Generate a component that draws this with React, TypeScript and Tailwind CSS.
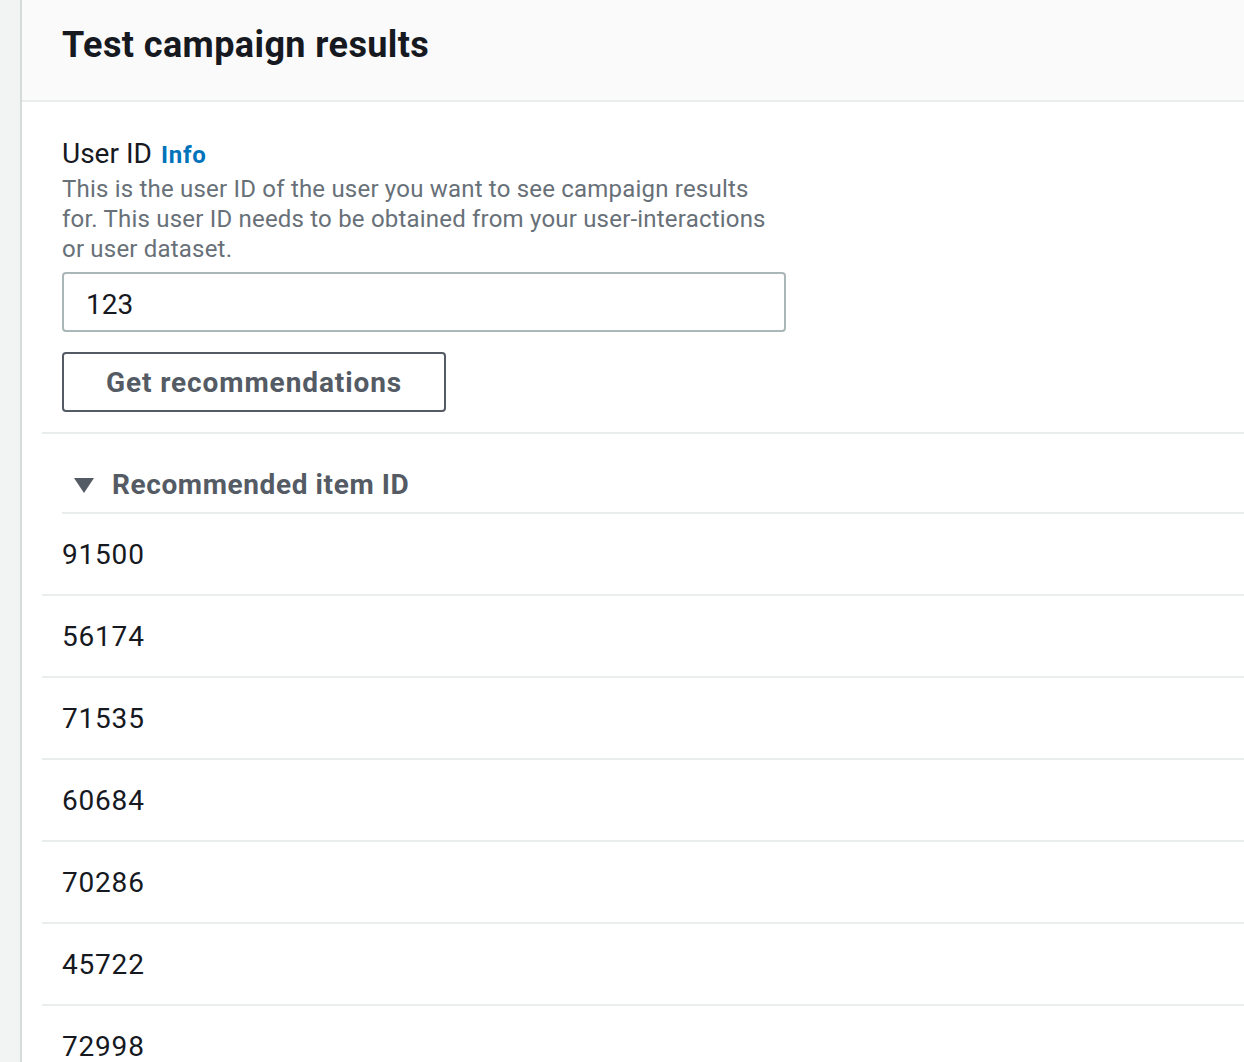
import React from "react";

const rows = ["91500", "56174", "71535", "60684", "70286", "45722", "72998"];

export default function App() {
  return (
    <div
      className="flex h-[1062px] w-full overflow-hidden bg-white"
      style={{ fontFamily: "Roboto, 'Noto Sans', sans-serif" }}
    >
      <div className="w-[22px] shrink-0 border-r-2 border-[#d5dbdb] bg-[#f2f3f3]" />
      <div className="flex min-w-0 flex-1 flex-col">
        <div className="flex h-[102px] shrink-0 items-center border-b-2 border-[#eaeded] bg-[#fafafa] px-[40px] pb-[10px]">
          <h1 className="text-[36px] font-bold leading-[44px] tracking-[0.4px] text-[#16191f]">Test campaign results</h1>
        </div>
        <div className="flex flex-col pl-[20px]">
          <div className="flex flex-col px-[20px] pt-[32px]">
            <div className="flex items-baseline gap-[9px] leading-[40px]">
              <span className="text-[28px] text-[#16191f]">User ID</span>
              <span className="text-[24px] font-bold tracking-[0.8px] text-[#0073bb]">Info</span>
            </div>
            <p className="-mt-[1px] w-[724px] text-[24px] leading-[30px] tracking-[0.2px] text-[#687078]">
              This is the user ID of the user you want to see campaign results for. This user ID needs to be obtained
              from your user-interactions or user dataset.
            </p>
            <div className="mt-[8px] flex h-[60px] w-[724px] items-center rounded-[4px] border-2 border-[#aab7b8] pl-[22px] pt-[5px] text-[28px] text-[#16191f]">
              123
            </div>
            <button className="mt-[20px] flex h-[60px] w-[384px] items-center justify-center rounded-[4px] border-2 border-[#545b64] bg-white pt-[2px] text-[28px] font-bold tracking-[0.9px] text-[#545b64]">
              Get recommendations
            </button>
          </div>
          <div className="mt-[20px] h-[2px] bg-[#eaeded]" />
          <div className="pl-[20px]">
            <div className="flex h-[80px] items-center gap-[18px] border-b-2 border-[#eaeded] pl-[12px] pt-[24px]">
              <svg width="20" height="15" viewBox="0 0 20 15">
                <polygon points="0,0 20,0 10,15" fill="#545b64" />
              </svg>
              <span className="text-[28px] font-bold tracking-[0.6px] text-[#545b64]">Recommended item ID</span>
            </div>
          </div>
          {rows.map((r) => (
            <div
              key={r}
              className="flex h-[82px] shrink-0 items-center border-b-2 border-[#eaeded] pl-[20px] pt-[2px] text-[28px] tracking-[0.8px] text-[#16191f]"
            >
              {r}
            </div>
          ))}
        </div>
      </div>
    </div>
  );
}
